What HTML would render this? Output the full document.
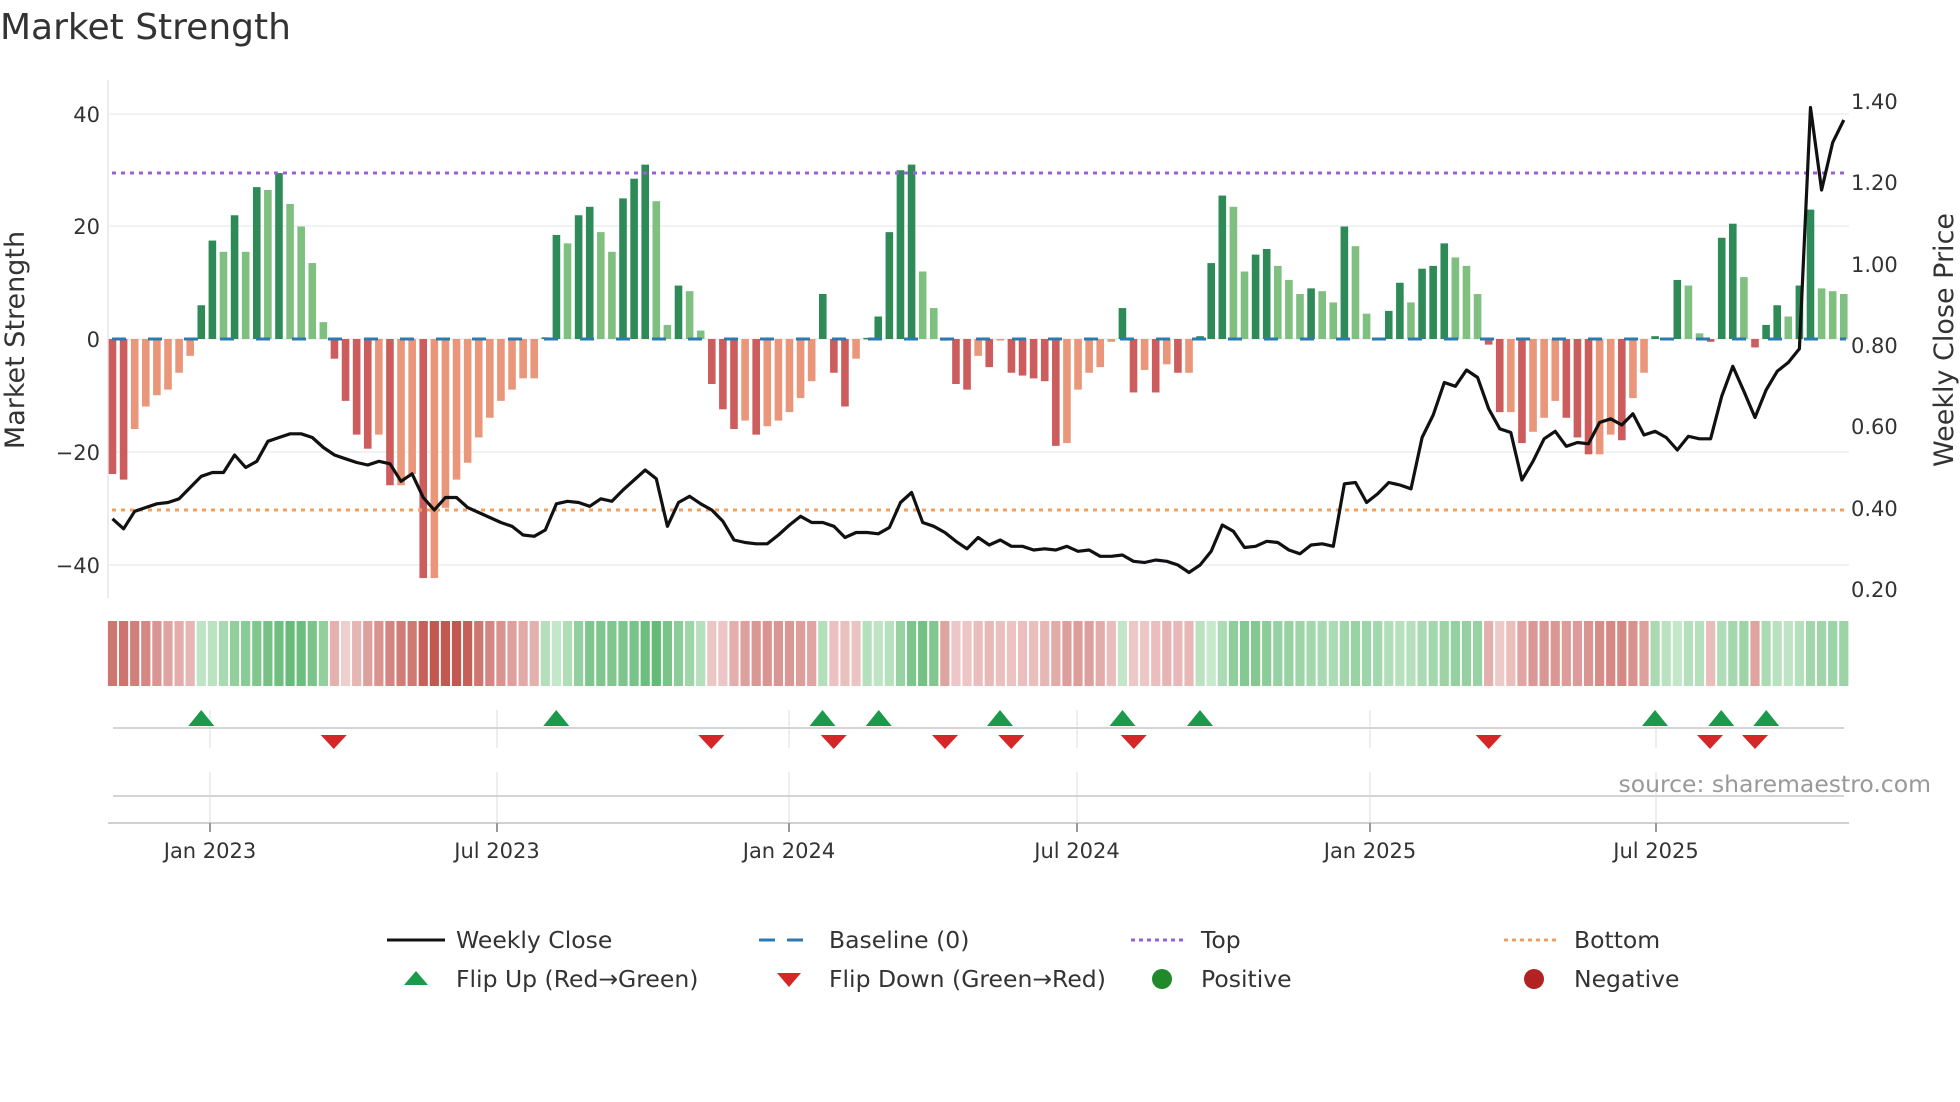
<!DOCTYPE html>
<html><head><meta charset="utf-8"><style>
html,body{margin:0;padding:0;background:#fff;width:1960px;height:1102px;overflow:hidden}
svg text{font-family:"DejaVu Sans","Liberation Sans",sans-serif;fill:#333}
</style></head><body>
<svg id="s" width="1960" height="1102" viewBox="0 0 1960 1102" xmlns="http://www.w3.org/2000/svg">
<text x="0" y="39" font-size="36">Market Strength</text>
<g id="grid" stroke="#eceef2" stroke-width="1.5">
<line x1="109" y1="114" x2="1849" y2="114"/><line x1="109" y1="226" x2="1849" y2="226"/>
<line x1="109" y1="339" x2="1849" y2="339"/><line x1="109" y1="452" x2="1849" y2="452"/>
<line x1="109" y1="565" x2="1849" y2="565"/>
</g>
<line x1="108" y1="80" x2="108" y2="598" stroke="#e4e6ea" stroke-width="1.5"/>
<g font-size="21" text-anchor="end">
<text x="100" y="122">40</text><text x="100" y="234">20</text><text x="100" y="347">0</text>
<text x="100" y="460">−20</text><text x="100" y="573">−40</text>
</g>
<g font-size="21">
<text x="1851" y="109">1.40</text><text x="1851" y="190">1.20</text><text x="1851" y="272">1.00</text>
<text x="1851" y="353">0.80</text><text x="1851" y="434">0.60</text><text x="1851" y="516">0.40</text>
<text x="1851" y="597">0.20</text>
</g>
<text transform="translate(24,340) rotate(-90)" font-size="27" text-anchor="middle">Market Strength</text>
<text transform="translate(1953,340) rotate(-90)" font-size="27" text-anchor="middle">Weekly Close Price</text>
<g id="bars"></g>
<line x1="112" y1="339" x2="1846" y2="339" stroke="#2b7bb0" stroke-width="3" stroke-dasharray="14,22"/>
<line x1="112" y1="173" x2="1846" y2="173" stroke="#9b5fd6" stroke-width="3" stroke-dasharray="4,5"/>
<line x1="112" y1="510" x2="1846" y2="510" stroke="#f0a060" stroke-width="3" stroke-dasharray="4,5"/>
<polyline id="pl" fill="none" stroke="#111" stroke-width="3.2" stroke-linejoin="round"/>
<g id="heat"></g>
<g stroke="#e8e8ec" stroke-width="1.5">
<line x1="210" y1="710" x2="210" y2="748"/><line x1="497" y1="710" x2="497" y2="748"/><line x1="789" y1="710" x2="789" y2="748"/><line x1="1077" y1="710" x2="1077" y2="748"/><line x1="1370" y1="710" x2="1370" y2="748"/><line x1="1656" y1="710" x2="1656" y2="748"/>
<line x1="210" y1="772" x2="210" y2="822"/><line x1="497" y1="772" x2="497" y2="822"/><line x1="789" y1="772" x2="789" y2="822"/><line x1="1077" y1="772" x2="1077" y2="822"/><line x1="1370" y1="772" x2="1370" y2="822"/><line x1="1656" y1="772" x2="1656" y2="822"/>
</g>
<line x1="113" y1="728" x2="1844" y2="728" stroke="#d4d4d6" stroke-width="2"/>
<line x1="113" y1="796" x2="1844" y2="796" stroke="#d4d4d6" stroke-width="2"/>
<line x1="108" y1="823" x2="1849" y2="823" stroke="#d0d0d2" stroke-width="2"/>
<g stroke="#999" stroke-width="2">
<line x1="210" y1="823" x2="210" y2="832"/><line x1="497" y1="823" x2="497" y2="832"/><line x1="789" y1="823" x2="789" y2="832"/><line x1="1077" y1="823" x2="1077" y2="832"/><line x1="1370" y1="823" x2="1370" y2="832"/><line x1="1656" y1="823" x2="1656" y2="832"/>
</g>
<g id="flips"></g>
<text x="1931" y="792" font-size="23.5" text-anchor="end" style="fill:#999">source: sharemaestro.com</text>
<g font-size="21" text-anchor="middle">
<text x="210" y="858">Jan 2023</text><text x="497" y="858">Jul 2023</text><text x="789" y="858">Jan 2024</text>
<text x="1077" y="858">Jul 2024</text><text x="1370" y="858">Jan 2025</text><text x="1656" y="858">Jul 2025</text>
</g>
<g font-size="23.5">
<line x1="387" y1="940" x2="445" y2="940" stroke="#111" stroke-width="3"/>
<text x="456" y="948">Weekly Close</text>
<line x1="759" y1="940" x2="814" y2="940" stroke="#2b7bb0" stroke-width="3" stroke-dasharray="16,12"/>
<text x="829" y="948">Baseline (0)</text>
<line x1="1131" y1="940" x2="1186" y2="940" stroke="#9b5fd6" stroke-width="3" stroke-dasharray="4,4"/>
<text x="1201" y="948">Top</text>
<line x1="1504" y1="940" x2="1559" y2="940" stroke="#f0a060" stroke-width="3" stroke-dasharray="4,4"/>
<text x="1574" y="948">Bottom</text>
<polygon points="404,985 416,971 428,985" fill="#1a9a4a"/>
<text x="456" y="987">Flip Up (Red→Green)</text>
<polygon points="777,973 801,973 789,987" fill="#d62728"/>
<text x="829" y="987">Flip Down (Green→Red)</text>
<circle cx="1162" cy="979" r="10" fill="#208a2a"/>
<text x="1201" y="987">Positive</text>
<circle cx="1534" cy="979" r="10" fill="#b22222"/>
<text x="1574" y="987">Negative</text>
</g>
</svg>
<script>
var v=[-24,-25,-16,-12,-10,-9,-6,-3,6,17.5,15.5,22,15.5,27,26.5,29.5,24,20,13.5,3,-3.5,-11,-17,-19.5,-17,-26,-26,-24,-42.5,-42.5,-30,-25,-22,-17.5,-14,-11,-9,-7,-7,0.3,18.5,17,22,23.5,19,15.5,25,28.5,31,24.5,2.5,9.5,8.5,1.5,-8,-12.5,-16,-14.5,-17,-15.5,-14.5,-13,-10.5,-7.5,8,-6,-12,-3.5,0.2,4,19,30,31,12,5.5,-0.3,-8,-9,-3,-5,-0.2,-6,-6.5,-7,-7.5,-19,-18.5,-9,-6,-5,-0.5,5.5,-9.5,-5.5,-9.5,-4.5,-6,-6,0.5,13.5,25.5,23.5,12,15,16,13,10.5,8,9,8.5,6.5,20,16.5,4.5,0.2,5,10,6.5,12.5,13,17,14.5,13,8,-1,-13,-13,-18.5,-16.5,-14,-11,-14,-17.5,-20.5,-20.5,-17,-18,-10.5,-6,0.5,0.2,10.5,9.5,1,-0.5,18,20.5,11,-1.5,2.5,6,4,9.5,23,9,8.5,8];
var p=[415,423,409,406,403,402,399,390,381,378,378,364,374,369,353,350,347,347,350,358,364,367,370,372,369,371,385,379,398,408,398,398,406,410,414,418,421,428,429,424,403,401,402,405,399,401,392,384,376,383,421,402,397,403,408,417,432,434,435,435,428,420,413,418,418,421,430,426,426,427,422,402,394,418,421,426,433,439,430,436,432,437,437,440,439,440,437,441,440,445,445,444,449,450,448,449,452,458,452,441,420,425,438,437,433,434,440,443,436,435,437,387,386,402,395,386,388,391,350,332,306,309,296,302,327,343,346,384,369,351,345,357,354,355,338,335,340,331,348,345,350,360,349,351,351,317,293,313,334,312,297,290,279,86,152,114,96];
var NS="http://www.w3.org/2000/svg";
function X(i){return 112.5+i*11.098;}
function el(t,a,par){var e=document.createElementNS(NS,t);for(var k in a)e.setAttribute(k,a[k]);document.getElementById(par).appendChild(e);return e;}
function mix(a,b,t){var r=[];for(var i=0;i<3;i++)r.push(Math.round(a[i]+(b[i]-a[i])*t));return "rgb("+r.join(",")+")";}
var pts=[];
for(var i=0;i<v.length;i++){
 var x=X(i),val=v[i],prev=i?v[i-1]:0,y0=339,y1=339-val*5.625,c;
 if(val>=0)c=(val>prev)?"#2e8b57":"#7fbf7f";else c=(val<prev)?"#cd5c5c":"#e9967a";
 el("rect",{x:x-3.8,y:Math.min(y0,y1),width:7.6,height:Math.max(1.5,Math.abs(y1-y0)),fill:c},"bars");
 pts.push(x.toFixed(1)+","+(p[i]*1.25).toFixed(1));
 var s=0,n=0;for(var j=Math.max(0,i-3);j<=i;j++){s+=v[j];n++;}s/=n;
 var t=Math.min(1,Math.abs(s)/32);
 var hc=(val>=0)?mix([200,233,205],[84,178,104],t):mix([240,208,208],[194,88,80],t);
 el("rect",{x:x-4.6,y:621,width:9.2,height:65,fill:hc},"heat");
}
document.getElementById("pl").setAttribute("points",pts.join(" "));
var up=[161,445,658,703,800,898,960,1324,1377,1413],dn=[267,569,667,756,809,907,1191,1368,1404];
up.forEach(function(d){var x=d*1.25;el("polygon",{points:(x-13)+",726 "+x+",710 "+(x+13)+",726",fill:"#1a9a4a"},"flips");});
dn.forEach(function(d){var x=d*1.25;el("polygon",{points:(x-13)+",735 "+(x+13)+",735 "+x+",749",fill:"#d62728"},"flips");});
</script>
</body></html>
